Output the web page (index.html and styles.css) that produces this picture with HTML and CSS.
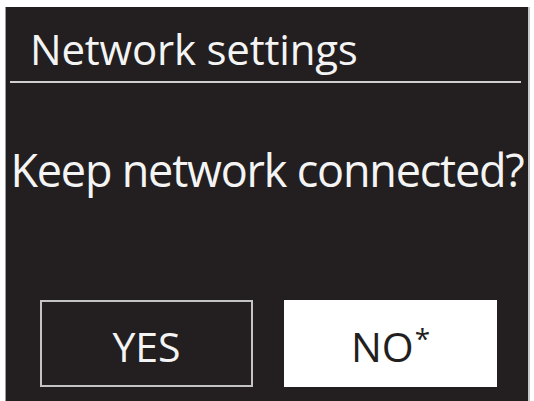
FILE: index.html
```html
<!DOCTYPE html>
<html>
<head>
<meta charset="utf-8">
<link rel="stylesheet" href="styles.css">
</head>
<body>
<div class="screen">
  <div class="title">Network settings</div>
  <div class="rule"></div>
  <div class="question">Keep network connected?</div>
  <div class="buttons">
    <div class="btn btn-yes">YES</div>
    <div class="btn btn-no">NO<span class="star">*</span></div>
  </div>
</div>
</body>
</html>
```
FILE: styles.css
```css
html, body {
  margin: 0;
  padding: 0;
  background: #ffffff;
}
body {
  width: 534px;
  height: 401px;
  overflow: hidden;
  font-family: "Open Sans", "Noto Sans", sans-serif;
}
.screen {
  margin: 7px 0 0 5px;
  width: 522px;
  height: 394px;
  background: #231f20;
  border-left: 1px solid #9a9a9a;
  border-right: 2px solid #c8c8c8;
  display: flex;
  flex-direction: column;
  color: #f4f4f4;
}
.title {
  font-size: 42px;
  line-height: 1;
  padding: 21px 0 0 24px;
  height: 42px;
  letter-spacing: -0.2px;
  white-space: nowrap;
}
.rule {
  margin: 11px 7px 0 4px;
  height: 2px;
  background: #cfcfcf;
}
.question {
  font-size: 45px;
  line-height: 1;
  padding-top: 64px;
  text-align: center;
  letter-spacing: -1.2px;
  white-space: nowrap;
}
.buttons {
  display: flex;
  gap: 31px;
  padding: 108px 0 0 34px;
}
.btn {
  width: 213px;
  height: 87px;
  box-sizing: border-box;
  display: flex;
  align-items: center;
  justify-content: center;
  padding-top: 5px;
  font-size: 41px;
}
.btn-yes {
  border: 2px solid #c4c4c4;
  color: #f4f4f4;
}
.btn-no {
  background: #ffffff;
  color: #231f20;
}
.star {
  font-size: 28px;
  align-self: flex-start;
  margin-top: 14px;
  margin-left: 1px;
}
```
